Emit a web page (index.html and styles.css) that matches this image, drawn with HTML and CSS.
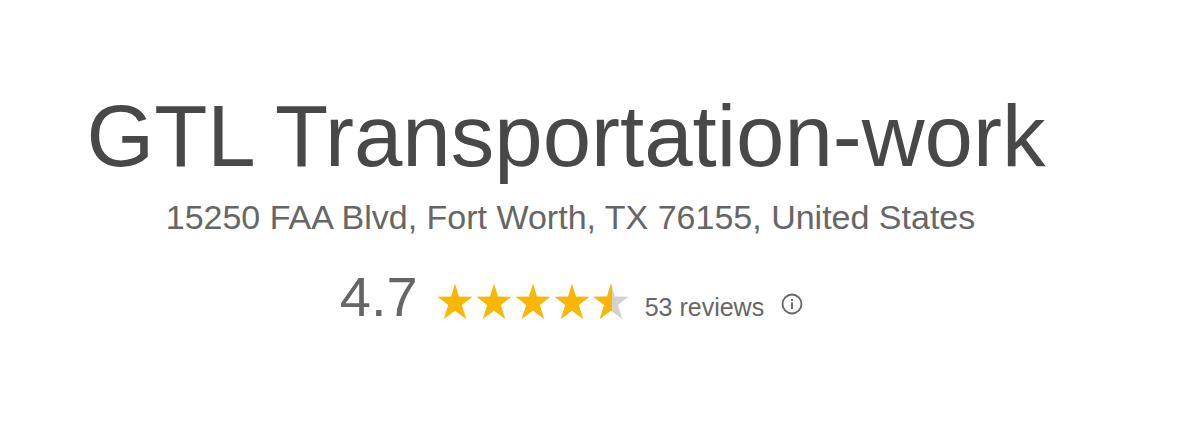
FILE: index.html
```html
<!DOCTYPE html>
<html lang="en">
<head>
<meta charset="utf-8">
<title>GTL Transportation-work</title>
<link rel="stylesheet" href="styles.css">
</head>
<body>
<main class="place">
  <h1 class="name">GTL Transportation-work</h1>
  <p class="address">15250 FAA Blvd, Fort Worth, TX 76155, United States</p>
  <div class="rating">
    <span class="score">4.7</span>
    <svg class="stars" viewBox="0 0 190 36" role="img" aria-label="4.7 out of 5 stars">
      <defs>
        <path id="star" d="M17 -0.500 L21 12.500 L34.500 12.700 L23.800 21 L28.300 35 L17 26.800 L5.700 35 L10.200 21 L-0.500 12.700 L13 12.500 Z"/>
        <clipPath id="half"><rect x="-1" y="-1" width="19" height="37"/></clipPath>
      </defs>
      <g fill="#f8b704">
        <use href="#star"/>
        <use href="#star" x="39"/>
        <use href="#star" x="78"/>
        <use href="#star" x="117"/>
      </g>
      <g transform="translate(156 0)">
        <use href="#star" fill="#d2d2d2"/>
        <use href="#star" fill="#f8b704" clip-path="url(#half)"/>
      </g>
    </svg>
    <span class="reviews">53 reviews</span>
    <button class="info" type="button" aria-label="About reviews">
      <svg class="info-icon" viewBox="0 0 22 22" aria-hidden="true">
        <circle cx="11" cy="11" r="9.500" fill="none" stroke="#666" stroke-width="1.800"/>
        <path d="M11 9.500v6.500M11 6v2" fill="none" stroke="#666" stroke-width="2"/>
      </svg>
    </button>
  </div>
</main>
</body>
</html>
```
FILE: styles.css
```css
body {
  margin: 0;
  background: #fff;
  font-family: "Liberation Sans", Arial, sans-serif;
  color: #666;
}

.place {
  display: flex;
  flex-direction: column;
  align-items: center;
  padding: 86px 60px 80px 0;
}

.name {
  margin: 0 8px 0 0;
  font-size: 87px;
  line-height: 100px;
  font-weight: 400;
  color: #484848;
}

.address {
  margin: 11px 0 0 1px;
  font-size: 34px;
  line-height: 40px;
}

.rating {
  display: flex;
  align-items: center;
  margin: 28px 0 0 3px;
}

.score {
  font-size: 56px;
  line-height: 64px;
}

.stars {
  width: 190px;
  height: 36px;
  margin: 10px 0 0 20px;
  overflow: visible;
}

.reviews {
  margin: 20px 0 0 17px;
  font-size: 25px;
  line-height: 28px;
}

.info {
  display: flex;
  margin: 14px 0 0 17px;
  padding: 0;
  border: 0;
  background: none;
}

.info-icon {
  width: 22px;
  height: 22px;
}
```
